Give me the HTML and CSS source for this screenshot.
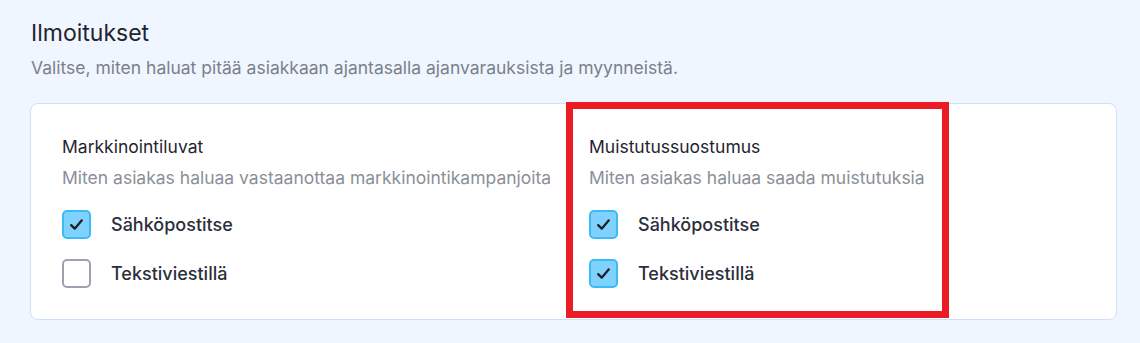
FILE: index.html
```html
<!DOCTYPE html>
<html lang="fi">
<head>
    <meta charset="UTF-8">
    <meta name="viewport" content="width=device-width, initial-scale=1.0">
    <title>Ilmoitukset</title>
    <link rel="stylesheet" href="styles.css">
</head>
<body>
    <div class="page">
        <div class="page-title">Ilmoitukset</div>
        <div class="page-desc">Valitse, miten haluat pitää asiakkaan ajantasalla ajanvarauksista ja myynneistä.</div>

        <div class="card">
            <div class="consent-group">
                <div class="group-title">Markkinointiluvat</div>
                <div class="group-desc">Miten asiakas haluaa vastaanottaa markkinointikampanjoita</div>
                <div class="options">
                    <label class="option">
                        <span class="box checked">
                            <svg viewBox="0 0 16 16"><polyline points="3.5,8.5 6.5,11.5 12.5,4.5"/></svg>
                        </span>
                        <span class="option-label">Sähköpostitse</span>
                    </label>
                    <label class="option">
                        <span class="box"></span>
                        <span class="option-label">Tekstiviestillä</span>
                    </label>
                </div>
            </div>

            <div class="consent-group">
                <div class="group-title">Muistutussuostumus</div>
                <div class="group-desc">Miten asiakas haluaa saada muistutuksia</div>
                <div class="options">
                    <label class="option">
                        <span class="box checked">
                            <svg viewBox="0 0 16 16"><polyline points="3.5,8.5 6.5,11.5 12.5,4.5"/></svg>
                        </span>
                        <span class="option-label">Sähköpostitse</span>
                    </label>
                    <label class="option">
                        <span class="box checked">
                            <svg viewBox="0 0 16 16"><polyline points="3.5,8.5 6.5,11.5 12.5,4.5"/></svg>
                        </span>
                        <span class="option-label">Tekstiviestillä</span>
                    </label>
                </div>
            </div>

            <!-- korostus -->
            <div class="highlight"></div>
        </div>
    </div>
</body>
</html>
```

FILE: styles.css
```css
body, html {
    margin: 0;
    padding: 0;
    height: 100%;
    width: 100%;
    font-family: Inter, "Noto Sans", sans-serif;
    background-color: #eff6ff;
    overflow: hidden;
}

.page {
    padding: 18px 23px 0 30px;
}

/* otsikko */
.page-title {
    font-size: 23px;
    line-height: 30px;
    color: #1f2430;
    padding-left: 1px;
}

.page-desc {
    margin-top: 8px;
    font-size: 17.5px;
    line-height: 24px;
    color: #7b8089;
    padding-left: 1px;
}

/* kortti */
.card {
    position: relative;
    margin-top: 23px;
    background-color: white;
    border: 1px solid #cfe0fb;
    border-radius: 8px;
    padding: 31px 32px 31px 31px;
    display: grid;
    grid-template-columns: 1fr 1fr;
    column-gap: 32px;
}

.group-title {
    font-size: 17.5px;
    line-height: 24px;
    color: #1f2430;
}

.group-desc {
    margin-top: 7px;
    font-size: 17.5px;
    line-height: 24px;
    color: #8a8f98;
}

.options {
    margin-top: 20px;
    display: flex;
    flex-direction: column;
    gap: 20px;
}

.option {
    display: flex;
    align-items: center;
    gap: 20px;
    height: 29px;
}

.box {
    box-sizing: border-box;
    width: 29px;
    height: 29px;
    border: 2px solid #9ca3af;
    border-radius: 5px;
    background-color: white;
    display: flex;
    align-items: center;
    justify-content: center;
}

.box.checked {
    background-color: #7fd2fd;
    border-color: #3cbaf6;
}

.box svg {
    width: 19px;
    height: 19px;
    fill: none;
    stroke: #1b1f2a;
    stroke-width: 1.9;
    stroke-linecap: round;
    stroke-linejoin: round;
}

.option-label {
    font-size: 18px;
    font-weight: 500;
    color: #2a2f3b;
}

.highlight {
    position: absolute;
    left: 535px;
    top: -2px;
    width: 383px;
    height: 216px;
    box-sizing: border-box;
    border: 7px solid #ec1c24;
}
```
